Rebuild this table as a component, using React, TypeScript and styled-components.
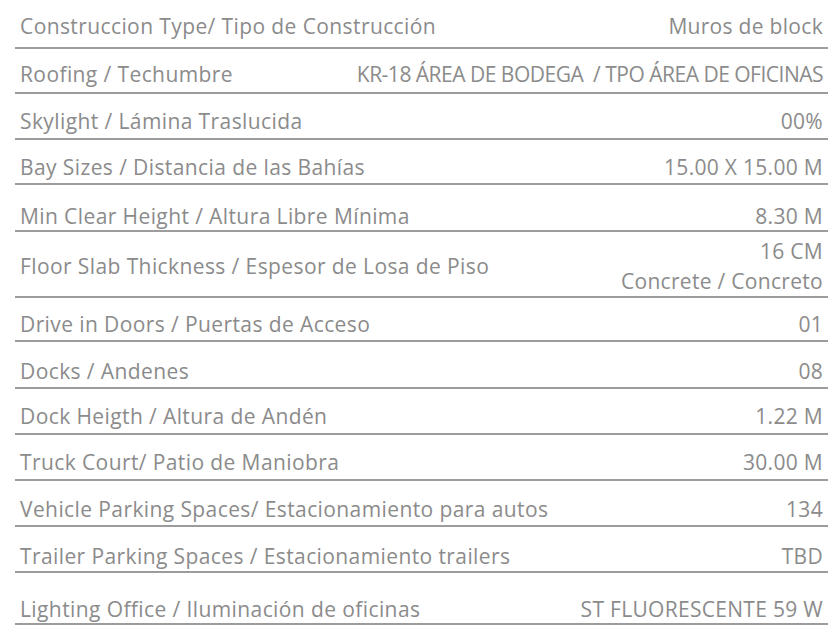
import React from "react";
import styled, { createGlobalStyle } from "styled-components";

const Global = createGlobalStyle`
  html, body { margin: 0; padding: 0; background: #ffffff; }
  body { font-family: "Open Sans", "Liberation Sans", sans-serif; }
`;

const Table = styled.div`
  display: flex;
  flex-direction: column;
  margin-left: 15px;
  width: 813px;
  color: #8b8b8b;
  font-size: 21px;
  line-height: 20px;
  letter-spacing: 0.4px;
`;

const Row = styled.div<{ $h: number; $pad: number }>`
  box-sizing: border-box;
  height: ${(p) => p.$h}px;
  display: flex;
  justify-content: space-between;
  align-items: flex-end;
  padding: 0 5px ${(p) => p.$pad}px 5px;
  border-bottom: 2px solid #9c9c9c;
`;

const Label = styled.span<{ $center?: boolean }>`
  white-space: nowrap;
  align-self: ${(p) => (p.$center ? "center" : "auto")};
  margin-top: ${(p) => (p.$center ? "4px" : "0")};
`;

const Value = styled.span<{ $tight?: boolean }>`
  white-space: pre;
  text-align: right;
  letter-spacing: ${(p) => (p.$tight ? "-0.5px" : "0.3px")};
`;

const MultiValue = styled.div`
  display: flex;
  flex-direction: column;
  align-items: flex-end;
  line-height: 30px;
`;

type Item = { label: string; value: string | string[]; h: number; pad: number; tight?: boolean };

const items: Item[] = [
  { label: "Construccion Type/ Tipo de Construcción", value: "Muros de block", h: 49, pad: 11.5 },
  { label: "Roofing / Techumbre", value: "KR-18 ÁREA DE BODEGA  / TPO ÁREA DE OFICINAS", h: 45, pad: 8, tight: true },
  { label: "Skylight / Lámina Traslucida", value: "00%", h: 46, pad: 7.5 },
  { label: "Bay Sizes / Distancia de las Bahías", value: "15.00 X 15.00 M", h: 45, pad: 6 },
  { label: "Min Clear Height / Altura Libre Mínima", value: "8.30 M", h: 47, pad: 4.5 },
  { label: "Floor Slab Thickness / Espesor de Losa de Piso", value: ["16 CM", "Concrete / Concreto"], h: 66, pad: 0 },
  { label: "Drive in Doors / Puertas de Acceso", value: "01", h: 44, pad: 6 },
  { label: "Docks / Andenes", value: "08", h: 47, pad: 6.5 },
  { label: "Dock Heigth / Altura de Andén", value: "1.22 M", h: 46, pad: 7 },
  { label: "Truck Court/ Patio de Maniobra", value: "30.00 M", h: 46, pad: 7 },
  { label: "Vehicle Parking Spaces/ Estacionamiento para autos", value: "134", h: 46, pad: 6 },
  { label: "Trailer Parking Spaces / Estacionamiento trailers", value: "TBD", h: 46, pad: 5.5 },
  { label: "Lighting Office / Iluminación de oficinas", value: "ST FLUORESCENTE 59 W", h: 52, pad: 4 },
];

export default function App() {
  return (
    <>
      <Global />
      <Table>
        {items.map((it) => (
          <Row key={it.label} $h={it.h} $pad={it.pad}>
            <Label $center={Array.isArray(it.value)}>{it.label}</Label>
            {Array.isArray(it.value) ? (
              <MultiValue>
                {it.value.map((v) => (
                  <Value key={v}>{v}</Value>
                ))}
              </MultiValue>
            ) : (
              <Value $tight={it.tight}>{it.value}</Value>
            )}
          </Row>
        ))}
      </Table>
    </>
  );
}
